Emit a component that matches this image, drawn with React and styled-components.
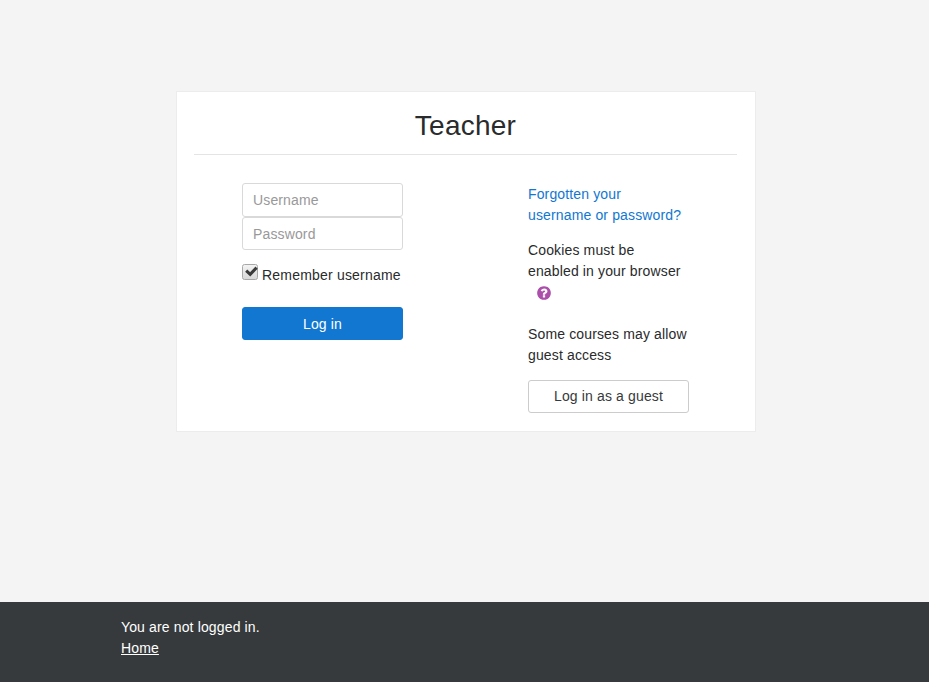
import React from "react";
import styled, { createGlobalStyle } from "styled-components";

const GlobalStyle = createGlobalStyle`
  * { box-sizing: border-box; }
  body {
    margin: 0;
    background: #f4f4f4;
    color: #292b2c;
    font: 14px/21px "Liberation Sans", Arial, sans-serif;
    letter-spacing: 0.14px;
  }
`;

const Page = styled.div`
  display: flex;
  flex-direction: column;
  height: 682px;
  overflow: hidden;
`;

const Main = styled.main`
  flex: 1;
  padding: 91px 173px 0 176px;
`;

const Card = styled.section`
  width: 580px;
  height: 341px;
  padding: 17px 18px 0 17px;
  background: #fff;
  border: 1px solid #ececec;
`;

const Title = styled.h1`
  margin: 0;
  height: 46px;
  border-bottom: 1px solid #e4e4e4;
  font-size: 28px;
  font-weight: 400;
  line-height: 34px;
  text-align: center;
  letter-spacing: 0.25px;
`;

const Columns = styled.div`
  display: grid;
  grid-template-columns: 161px 161px;
  column-gap: 125px;
  padding: 28px 0 0 48px;
`;

const LoginForm = styled.form`
  display: flex;
  flex-direction: column;
`;

const Field = styled.input`
  width: 100%;
  height: ${(p) => p.$height}px;
  padding: 0 10px;
  border: 1px solid #d9d9d9;
  border-radius: 3px;
  background: #fff;
  font: inherit;
  letter-spacing: inherit;
  &::placeholder { color: #999; opacity: 1; }
`;

const Remember = styled.label`
  display: flex;
  gap: 4px;
  height: 21px;
  margin: 14px 0 22px;
  white-space: nowrap;
  letter-spacing: 0.2px;
  span { padding-top: 1px; }
`;

const Button = styled.button`
  width: 161px;
  height: 33px;
  padding: ${(p) => (p.$primary ? "2px 0 0" : "0")};
  border: 1px solid ${(p) => (p.$primary ? "#1177d1" : "#ccc")};
  border-radius: 3px;
  background: ${(p) => (p.$primary ? "#1177d1" : "#fff")};
  color: ${(p) => (p.$primary ? "#fff" : "#373a3c")};
  font: inherit;
  letter-spacing: inherit;
`;

const Info = styled.div`
  padding-top: 1px;
`;

const Paragraph = styled.p`
  margin: 0 0 14px;
`;

const ForgottenLink = styled.a`
  color: #1177d1;
  text-decoration: none;
`;

const HelpRow = styled.div`
  height: 21px;
  margin: -14px 0 21px;
  padding: 3px 0 0 8px;
  svg { display: block; }
`;

const Footer = styled.footer`
  height: 80px;
  padding: 15px 121px;
  background: #373a3c;
  color: #fff;
`;

const HomeLink = styled.a`
  color: #fff;
  text-decoration: underline;
`;

function CheckIcon() {
  return (
    <svg width="16" height="16" viewBox="0 0 16 16">
      <defs>
        <linearGradient id="box" x1="0" y1="0" x2="0" y2="1">
          <stop offset="0" stopColor="#f4f4f4" />
          <stop offset="1" stopColor="#d8d8d8" />
        </linearGradient>
      </defs>
      <rect x="0.5" y="0.5" width="15" height="15" rx="2" fill="url(#box)" stroke="#a8a8a8" />
      <path d="M4.2 6.6 8.2 10.4 14.6 3.6" fill="none" stroke="#3b3b3b" strokeWidth="3" />
    </svg>
  );
}

function HelpIcon() {
  return (
    <svg width="16" height="16" viewBox="0 0 1792 1792" fill="#ab4fab">
      <path d="M1024 1376v-192q0-14-9-23t-23-9h-192q-14 0-23 9t-9 23v192q0 14 9 23t23 9h192q14 0 23-9t9-23zM1280 704q0-88-55.5-163t-138.5-116-170-41q-243 0-371 213-15 24 8 42l132 100q7 6 19 6 16 0 25-12 53-68 86-92 34-24 86-24 48 0 85.5 26t37.5 59q0 38-20 61t-68 45q-63 28-115.5 86.5t-52.5 125.5v36q0 14 9 23t23 9h192q14 0 23-9t9-23q0-19 21.5-49.5t54.5-49.5q32-18 49-28.5t46-35 44.5-48 28-60.5 12.5-81zM1664 896q0 209-103 385.5t-279.5 279.5-385.5 103-385.5-103-279.5-279.5-103-385.5 103-385.5 279.5-279.5 385.5-103 385.5 103 279.5 279.5 103 385.5z" />
    </svg>
  );
}

export default function App() {
  return (
    <Page>
      <GlobalStyle />
      <Main>
        <Card>
          <Title>Teacher</Title>
          <Columns>
            <LoginForm>
              <Field $height={34} placeholder="Username" />
              <Field $height={33} type="password" placeholder="Password" />
              <Remember>
                <CheckIcon />
                <span>Remember username</span>
              </Remember>
              <Button $primary type="button">Log in</Button>
            </LoginForm>
            <Info>
              <Paragraph>
                <ForgottenLink href="#">Forgotten your<br />username or password?</ForgottenLink>
              </Paragraph>
              <Paragraph>Cookies must be<br />enabled in your browser</Paragraph>
              <HelpRow><HelpIcon /></HelpRow>
              <Paragraph>Some courses may allow<br />guest access</Paragraph>
              <Button type="button">Log in as a guest</Button>
            </Info>
          </Columns>
        </Card>
      </Main>
      <Footer>
        <div>You are not logged in.</div>
        <HomeLink href="#">Home</HomeLink>
      </Footer>
    </Page>
  );
}
